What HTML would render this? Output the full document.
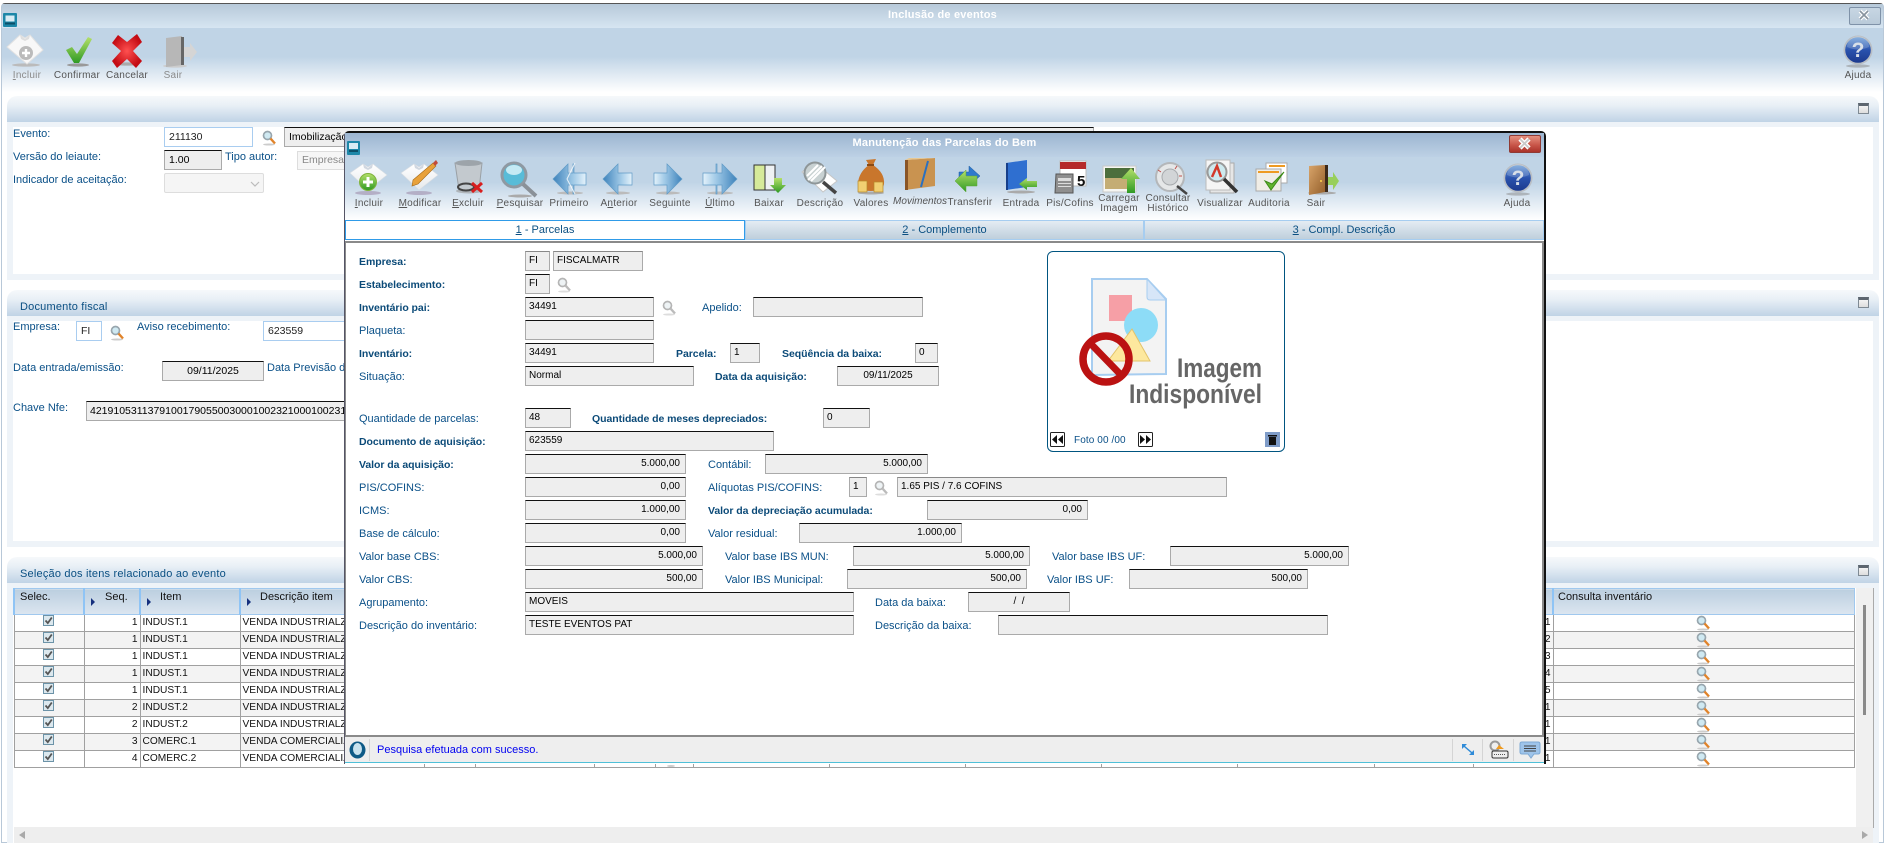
<!DOCTYPE html>
<html lang="pt-BR"><head><meta charset="utf-8"><title>Inclusão de eventos</title>
<style>
html,body{margin:0;padding:0;background:#fff}
#p{position:relative;width:1885px;height:843px;overflow:hidden;background:#fff;font-family:"Liberation Sans",Arial,sans-serif}
#p div,#p span{box-sizing:border-box}
.a{position:absolute}
.l{position:absolute;height:14px;line-height:14px;font-size:11px;color:#0a5088;white-space:nowrap}
.b{font-weight:bold;font-size:10.5px;letter-spacing:-.05px;color:#0b4a78}
.f{position:absolute;height:20px;background:#eee;border:1px solid #aaa;border-top-color:#111;font-size:10px;line-height:18px;color:#000;padding:0 3px;white-space:nowrap;overflow:hidden}
.r{text-align:right;padding-right:5px}.c{text-align:center}
.i{position:absolute;height:20px;background:#fff;border:1px solid #a9cdf0;font-size:10.5px;line-height:18px;color:#222;padding:0 4px;overflow:hidden}
.t{position:absolute;font-size:10px;line-height:11px;color:#555;letter-spacing:.25px;text-align:center;white-space:nowrap;transform:translateX(-50%)}
.g{color:#8b8b8b}
.ph{position:absolute;left:7px;width:1872px;height:26px;background:linear-gradient(#f6f9fb,#e9f0f6 35%,#c0d3e6);border-radius:10px 10px 0 0;font-size:11px;line-height:34px;padding-left:13px;color:#0a4f82;letter-spacing:.2px}
.pb{position:absolute;left:7px;width:1872px;background:#eef3f8}
.pw{position:absolute;left:13px;width:1860px;background:#fff}
.mn{position:absolute;left:1858px;width:11px;height:11px;background:linear-gradient(#f3f3f3,#ddd);border:1px solid #7f8a94;border-top:3px solid #5d6670}
table{position:absolute;left:13px;top:588px;border-collapse:collapse;table-layout:fixed;width:1840px;font-size:10.2px;color:#111}
th{height:23px;padding:2px 0 0;vertical-align:top;text-align:left;font-weight:normal;font-size:11px;line-height:12px;background:linear-gradient(#bccfe0,#dce6f0);border:1px solid #a0c8ee;border-left:2px solid #8fc4f5;color:#111}
td{height:16px;padding:0 2px;border:1px solid #a0a0a0;white-space:nowrap;overflow:hidden;line-height:14px}
tr.e td{background:#f3f3f3}
td.n{text-align:right}
.tab{position:absolute;top:220px;height:20px;font-size:11px;line-height:19px;text-align:center;color:#0a4f82;border:1px solid #a6cdf0;background:linear-gradient(#e4ecf3,#bfcfdc)}
u{text-decoration:underline}
</style></head><body><div id="p">

<!-- main window -->
<div class="a" style="left:1px;top:3px;width:1883px;height:840px;border:1px solid #b8c8d8;border-top:1px solid #555;border-radius:4px 4px 0 0;background:#fff"></div>
<div class="a" style="left:2px;top:4px;width:1881px;height:24px;background:linear-gradient(#b7c9d9,#d6e5f1)"></div>
<div class="a" style="left:2px;top:28px;width:1881px;height:64px;background:linear-gradient(#c0d4e6,#c0d4e6 45%,#fff)"></div>
<div class="a" style="left:0;top:8px;width:1885px;text-align:center;font-size:11px;font-weight:bold;line-height:14px;color:#fff;letter-spacing:.2px">Inclusão de eventos</div>
<div class="a" style="left:1849px;top:7px;width:32px;height:18px;border:1px solid #7f92a8;border-radius:2px;background:linear-gradient(#c7d6e3,#b9cad9)"></div>

<div class="t g" style="left:27px;top:70px"><u>I</u>ncluir</div>
<div class="t" style="left:77px;top:70px">Confirmar</div>
<div class="t" style="left:127px;top:70px">Cancelar</div>
<div class="t g" style="left:173px;top:70px">Sair</div>
<div class="t" style="left:1858px;top:70px">Ajuda</div>

<!-- panel 1 -->
<div class="pb" style="top:122px;height:158px"></div><div class="pw" style="top:127px;height:147px"></div>
<div class="ph" style="top:96px"></div><div class="mn" style="top:103px"></div>
<div class="l" style="left:13px;top:127px">Evento:</div>
<div class="i" style="left:164px;top:127px;width:89px">211130</div>
<div class="f" style="left:284px;top:127px;width:810px;line-height:18px;font-size:10.5px;padding-left:4px">Imobilização</div>
<div class="l" style="left:13px;top:150px">Versão do leiaute:</div>
<div class="f" style="left:164px;top:150px;width:58px;font-size:10.5px;line-height:18px;padding-left:4px">1.00</div>
<div class="l" style="left:225px;top:150px">Tipo autor:</div>
<div class="a" style="left:297px;top:151px;width:100px;height:19px;background:#f6f6f6;border:1px solid #ddd;font-size:10.5px;line-height:17px;color:#888;padding-left:4px">Empresa</div>
<div class="l" style="left:13px;top:173px">Indicador de aceitação:</div>
<div class="a" style="left:164px;top:173px;width:100px;height:20px;background:#f5f5f5;border:1px solid #ddd;border-radius:2px"></div>

<!-- panel 2 -->
<div class="pb" style="top:316px;height:231px"></div><div class="pw" style="top:321px;height:220px"></div>
<div class="ph" style="top:290px">Documento fiscal</div><div class="mn" style="top:297px"></div>
<div class="l" style="left:13px;top:320px">Empresa:</div>
<div class="i" style="left:76px;top:321px;width:26px">FI</div>
<div class="l" style="left:137px;top:320px">Aviso recebimento:</div>
<div class="i" style="left:263px;top:321px;width:120px">623559</div>
<div class="l" style="left:13px;top:361px">Data entrada/emissão:</div>
<div class="f c" style="left:162px;top:361px;width:102px;font-size:10.5px;line-height:18px">09/11/2025</div>
<div class="l" style="left:267px;top:361px">Data Previsão de</div>
<div class="l" style="left:13px;top:401px">Chave Nfe:</div>
<div class="f" style="left:86px;top:401px;width:300px;font-size:10.5px;line-height:18px">421910531137910017905500300010023210001002311</div>

<!-- panel 3 -->
<div class="pb" style="top:583px;height:260px"></div><div class="pw" style="top:588px;height:255px"></div>
<div class="ph" style="top:557px">Seleção dos itens relacionado ao evento</div><div class="mn" style="top:565px"></div>

<table><colgroup><col style="width:70px"><col style="width:56px"><col style="width:100px"><col style="width:184px"><col style="width:51px"><col style="width:119px"><col style="width:61px"><col style="width:38px"><col style="width:136px"><col style="width:136px"><col style="width:136px"><col style="width:136px"><col style="width:137px"><col style="width:99px"><col style="width:80px"><col style="width:301px"></colgroup>
<tr><th style="padding-left:5px">Selec.</th><th style="padding-left:20px">Seq.</th><th style="padding-left:19px">Item</th><th style="padding-left:19px">Descrição item</th><th></th><th></th><th></th><th></th><th></th><th></th><th></th><th></th><th></th><th></th><th></th><th style="padding-left:4px">Consulta inventário</th></tr>
<tr><td></td><td class="n">1</td><td>INDUST.1</td><td>VENDA INDUSTRIALZ</td><td></td><td></td><td></td><td></td><td></td><td></td><td></td><td></td><td></td><td></td><td class="n">1</td><td></td></tr>
<tr class="e"><td></td><td class="n">1</td><td>INDUST.1</td><td>VENDA INDUSTRIALZ</td><td></td><td></td><td></td><td></td><td></td><td></td><td></td><td></td><td></td><td></td><td class="n">2</td><td></td></tr>
<tr><td></td><td class="n">1</td><td>INDUST.1</td><td>VENDA INDUSTRIALZ</td><td></td><td></td><td></td><td></td><td></td><td></td><td></td><td></td><td></td><td></td><td class="n">3</td><td></td></tr>
<tr class="e"><td></td><td class="n">1</td><td>INDUST.1</td><td>VENDA INDUSTRIALZ</td><td></td><td></td><td></td><td></td><td></td><td></td><td></td><td></td><td></td><td></td><td class="n">4</td><td></td></tr>
<tr><td></td><td class="n">1</td><td>INDUST.1</td><td>VENDA INDUSTRIALZ</td><td></td><td></td><td></td><td></td><td></td><td></td><td></td><td></td><td></td><td></td><td class="n">5</td><td></td></tr>
<tr class="e"><td></td><td class="n">2</td><td>INDUST.2</td><td>VENDA INDUSTRIALZ</td><td></td><td></td><td></td><td></td><td></td><td></td><td></td><td></td><td></td><td></td><td class="n">1</td><td></td></tr>
<tr><td></td><td class="n">2</td><td>INDUST.2</td><td>VENDA INDUSTRIALZ</td><td></td><td></td><td></td><td></td><td></td><td></td><td></td><td></td><td></td><td></td><td class="n">1</td><td></td></tr>
<tr class="e"><td></td><td class="n">3</td><td>COMERC.1</td><td>VENDA COMERCIALIZ</td><td></td><td></td><td></td><td></td><td></td><td></td><td></td><td></td><td></td><td></td><td class="n">1</td><td></td></tr>
<tr><td></td><td class="n">4</td><td>COMERC.2</td><td>VENDA COMERCIALIZ</td><td></td><td></td><td></td><td></td><td></td><td></td><td></td><td></td><td></td><td></td><td class="n">1</td><td></td></tr>
</table>
<div class="a" style="left:1856px;top:588px;width:18px;height:240px;background:#f0f0f0;border-right:1px solid #aaa"></div>
<div class="a" style="left:1863px;top:605px;width:3px;height:110px;background:#8a8a8a"></div>
<div class="a" style="left:14px;top:827px;width:1859px;height:16px;background:#eee"></div>

<!-- lower layer icons -->
<svg class="a" style="left:0;top:0" width="1885" height="843">
<defs>
<g id="lens"><ellipse cx="7" cy="14.5" rx="6" ry="1" fill="#ccc"/><circle cx="5.5" cy="5.5" r="4" fill="#cfe9f2" stroke="#98a6ae" stroke-width="1.7"/><path d="M8.5 8.5L13 13.5" stroke="#e0832a" stroke-width="2.4"/></g>
<g id="lensg"><ellipse cx="7" cy="14.5" rx="6" ry="1" fill="#ddd"/><circle cx="5.5" cy="5.5" r="4" fill="#eef3f5" stroke="#b5b5b5" stroke-width="1.7"/><path d="M8.5 8.5L13 13.5" stroke="#bbb" stroke-width="2.4"/></g>
<g id="chk"><rect x=".5" y=".5" width="10" height="10" fill="#dce8ee" stroke="#6c93a8"/><path d="M2.5 5.5l2.3 2.6L8.8 2.5" fill="none" stroke="#555" stroke-width="1.8"/></g>
<g id="tri"><path d="M0 0l4 4-4 4z" fill="#16307e"/></g>
<linearGradient id="hb" x1="0" y1="0" x2="0" y2="1"><stop offset="0" stop-color="#6d9ed8"/><stop offset=".5" stop-color="#2a52ad"/><stop offset="1" stop-color="#1c3a8e"/></linearGradient>
<radialGradient id="rd"><stop offset="0" stop-color="#ff5050"/><stop offset="1" stop-color="#c40c14"/></radialGradient>
<linearGradient id="gn" x1="0" y1="0" x2="0" y2="1"><stop offset="0" stop-color="#b5e06a"/><stop offset="1" stop-color="#2f9a24"/></linearGradient>
<linearGradient id="bl" x1="0" y1="0" x2="1" y2="0"><stop offset="0" stop-color="#3d82bb"/><stop offset=".6" stop-color="#9ec8e6"/><stop offset="1" stop-color="#e4f2fb"/></linearGradient>
<linearGradient id="br" x1="1" y1="0" x2="0" y2="0"><stop offset="0" stop-color="#3d82bb"/><stop offset=".6" stop-color="#9ec8e6"/><stop offset="1" stop-color="#e4f2fb"/></linearGradient>
<linearGradient id="dr" x1="0" y1="0" x2="1" y2="1"><stop offset="0" stop-color="#d8a46a"/><stop offset="1" stop-color="#945f2a"/></linearGradient>
<g id="help"><ellipse cx="15" cy="31" rx="12" ry="1.6" fill="#888" opacity=".5"/><circle cx="15" cy="15" r="14.5" fill="#b9bec4"/><circle cx="15" cy="15" r="12.8" fill="url(#hb)"/><path d="M4 12a11 11 0 0 1 22 0q-11 5-22 0z" fill="#fff" opacity=".18"/><text x="15" y="22" text-anchor="middle" font-family="Liberation Sans" font-weight="bold" font-size="21" fill="#d8dfe8">?</text></g>
</defs>
<!-- win icon -->
<rect x="3" y="13" width="14" height="14" fill="#1d87a8" rx="1"/><rect x="5.5" y="15.5" width="9" height="6" fill="#d9ecf4"/><rect x="5" y="22.5" width="10" height="2" fill="#0c4f68"/>
<!-- close X -->
<path d="M1860 11l8 8m0-8l-8 8" stroke="#fff" stroke-width="4"/><path d="M1860 11l8 8m0-8l-8 8" stroke="#88939e" stroke-width="1.6"/>
<!-- toolbar: Incluir disabled -->
<ellipse cx="26" cy="65" rx="14" ry="1.6" fill="#bbb"/>
<path d="M7 47L20 35L25 38L30 35L43 50L27 64Z" fill="#f8f8f8" stroke="#e2e2e2"/><path d="M20 35l5 4 5-4-1 4-4 2-4-2z" fill="#dedede"/><circle cx="26" cy="53" r="7" fill="#bbb"/><path d="M22 53h8m-4-4v8" stroke="#fff" stroke-width="2.4"/>
<!-- Confirmar -->
<ellipse cx="78" cy="65" rx="11" ry="1.6" fill="#999"/><path d="M66 50l6-3 5 7 11-17 4 2-13 24h-5z" fill="url(#gn)"/>
<!-- Cancelar -->
<ellipse cx="127" cy="64" rx="12" ry="1.6" fill="#aaa"/><path d="M112 43l6-8 9 7 10-8 5 8-9 9 9 10-6 7-9-9-10 9-5-7 9-10z" fill="url(#rd)"/>
<!-- Sair disabled -->
<ellipse cx="175" cy="66" rx="12" ry="1.6" fill="#ccc"/><path d="M166 38l16-2v29l-16 2z" fill="#b7b7b7"/><rect x="181" y="37" width="3" height="28" fill="#666"/><path d="M184 47h6v-4l7 9-7 9v-4h-6z" fill="#d5d5d5"/>
<use href="#help" x="1843" y="35"/>
<use href="#lens" x="262" y="130"/><path d="M251 182l4 4 4-4" fill="none" stroke="#bbb" stroke-width="1.2"/>
<use href="#lens" x="110" y="325"/>
<!-- checks -->
<use href="#chk" x="43" y="615"/><use href="#chk" x="43" y="632"/><use href="#chk" x="43" y="649"/><use href="#chk" x="43" y="666"/><use href="#chk" x="43" y="683"/><use href="#chk" x="43" y="700"/><use href="#chk" x="43" y="717"/><use href="#chk" x="43" y="734"/><use href="#chk" x="43" y="751"/>
<use href="#tri" x="91" y="598"/><use href="#tri" x="147" y="598"/><use href="#tri" x="247" y="598"/>
<use href="#lens" x="1696" y="615"/><use href="#lens" x="1696" y="632"/><use href="#lens" x="1696" y="649"/><use href="#lens" x="1696" y="666"/><use href="#lens" x="1696" y="683"/><use href="#lens" x="1696" y="700"/><use href="#lens" x="1696" y="717"/><use href="#lens" x="1696" y="734"/><use href="#lens" x="1696" y="751"/>
<path d="M25 831v8l-6-4z" fill="#a9a9a9"/><path d="M1862 831v8l6-4z" fill="#a9a9a9"/>
<ellipse cx="671" cy="766" rx="4" ry="1" fill="#ccc"/>
</svg>

<!-- modal -->
<div class="a" style="left:344px;top:131px;width:1202px;height:633px;background:#fff;border:2px solid #111;border-left:1px solid #556;border-bottom:0;border-radius:5px 5px 0 0"></div>
<div class="a" style="left:345px;top:133px;width:1199px;height:24px;background:linear-gradient(#9cb5d1,#bdd1e5)"></div>
<div class="a" style="left:345px;top:157px;width:1199px;height:63px;background:linear-gradient(#c0d4e6,#c0d4e6 40%,#fff)"></div>
<div class="a" style="left:345px;top:136px;width:1199px;text-align:center;font-size:11px;font-weight:bold;line-height:14px;color:#fff;letter-spacing:.2px">Manutenção das Parcelas do Bem</div>
<div class="a" style="left:1509px;top:135px;width:32px;height:18px;border:1px solid #8f3a34;border-radius:2px;background:linear-gradient(#e5907f,#c9574a 55%,#aa332a)"></div>

<div class="t" style="left:369px;top:198px"><u>I</u>ncluir</div>
<div class="t" style="left:420px;top:198px"><u>M</u>odificar</div>
<div class="t" style="left:468px;top:198px"><u>E</u>xcluir</div>
<div class="t" style="left:520px;top:198px"><u>P</u>esquisar</div>
<div class="t" style="left:569px;top:198px">Primeiro</div>
<div class="t" style="left:619px;top:198px">A<u>n</u>terior</div>
<div class="t" style="left:670px;top:198px">Se<u>g</u>uinte</div>
<div class="t" style="left:720px;top:198px"><u>Ú</u>ltimo</div>
<div class="t" style="left:769px;top:198px">Baixar</div>
<div class="t" style="left:820px;top:198px">Descrição</div>
<div class="t" style="left:871px;top:198px">Valores</div>
<div class="t" style="left:920px;top:196px;font-style:italic;letter-spacing:0">Movimentos</div>
<div class="t" style="left:970px;top:197px">Transferir</div>
<div class="t" style="left:1021px;top:198px">Entrada</div>
<div class="t" style="left:1070px;top:198px">Pis/Cofins</div>
<div class="t" style="left:1119px;top:194px;line-height:9.5px">Carregar<br>Imagem</div>
<div class="t" style="left:1168px;top:194px;line-height:9.5px">Consultar<br>Histórico</div>
<div class="t" style="left:1220px;top:198px">Visualizar</div>
<div class="t" style="left:1269px;top:198px">Auditoria</div>
<div class="t" style="left:1316px;top:198px">Sair</div>
<div class="t" style="left:1517px;top:198px">Ajuda</div>

<div class="tab" style="left:345px;width:400px;background:#fff;border:1px solid #2f9be8;color:#0a4f82"><u>1</u> - Parcelas</div>
<div class="tab" style="left:745px;width:399px"><u>2</u> - Complemento</div>
<div class="tab" style="left:1144px;width:400px"><u>3</u> - Compl. Descrição</div>

<div class="a" style="left:345px;top:241px;width:1199px;height:496px;background:#fff;border:2px solid #8a8a8a;border-left:1px solid #8a8a8a"></div>

<!-- form -->
<div class="l b" style="left:359px;top:255px">Empresa:</div>
<div class="f" style="left:525px;top:251px;width:25px;border-top-color:#888">FI</div>
<div class="f" style="left:553px;top:251px;width:90px;border-top-color:#888">FISCALMATR</div>
<div class="l b" style="left:359px;top:278px">Estabelecimento:</div>
<div class="f" style="left:525px;top:274px;width:25px">FI</div>
<div class="l b" style="left:359px;top:301px">Inventário pai:</div>
<div class="f" style="left:525px;top:297px;width:129px">34491</div>
<div class="l" style="left:702px;top:301px">Apelido:</div>
<div class="f" style="left:753px;top:297px;width:170px"></div>
<div class="l" style="left:359px;top:324px">Plaqueta:</div>
<div class="f" style="left:525px;top:320px;width:129px"></div>
<div class="l b" style="left:359px;top:347px">Inventário:</div>
<div class="f" style="left:525px;top:343px;width:129px">34491</div>
<div class="l b" style="left:676px;top:347px">Parcela:</div>
<div class="f" style="left:730px;top:343px;width:30px">1</div>
<div class="l b" style="left:782px;top:347px">Seqüência da baixa:</div>
<div class="f" style="left:915px;top:343px;width:23px">0</div>
<div class="l" style="left:359px;top:370px">Situação:</div>
<div class="f" style="left:525px;top:366px;width:169px">Normal</div>
<div class="l b" style="left:715px;top:370px">Data da aquisição:</div>
<div class="f c" style="left:837px;top:366px;width:102px">09/11/2025</div>
<div class="l" style="left:359px;top:412px">Quantidade de parcelas:</div>
<div class="f" style="left:525px;top:408px;width:46px">48</div>
<div class="l b" style="left:592px;top:412px">Quantidade de meses depreciados:</div>
<div class="f" style="left:823px;top:408px;width:47px">0</div>
<div class="l b" style="left:359px;top:435px">Documento de aquisição:</div>
<div class="f" style="left:525px;top:431px;width:249px">623559</div>
<div class="l b" style="left:359px;top:458px">Valor da aquisição:</div>
<div class="f r" style="left:525px;top:454px;width:161px">5.000,00</div>
<div class="l" style="left:708px;top:458px">Contábil:</div>
<div class="f r" style="left:765px;top:454px;width:163px">5.000,00</div>
<div class="l" style="left:359px;top:481px">PIS/COFINS:</div>
<div class="f r" style="left:525px;top:477px;width:161px">0,00</div>
<div class="l" style="left:708px;top:481px">Alíquotas PIS/COFINS:</div>
<div class="f" style="left:849px;top:477px;width:18px;border-top-color:#888">1</div>
<div class="f" style="left:897px;top:477px;width:330px;border-top-color:#888">1.65 PIS / 7.6 COFINS</div>
<div class="l" style="left:359px;top:504px">ICMS:</div>
<div class="f r" style="left:525px;top:500px;width:161px">1.000,00</div>
<div class="l b" style="left:708px;top:504px">Valor da depreciação acumulada:</div>
<div class="f r" style="left:927px;top:500px;width:161px">0,00</div>
<div class="l" style="left:359px;top:527px">Base de cálculo:</div>
<div class="f r" style="left:525px;top:523px;width:161px">0,00</div>
<div class="l" style="left:708px;top:527px">Valor residual:</div>
<div class="f r" style="left:799px;top:523px;width:163px">1.000,00</div>
<div class="l" style="left:359px;top:550px">Valor base CBS:</div>
<div class="f r" style="left:525px;top:546px;width:178px">5.000,00</div>
<div class="l" style="left:725px;top:550px">Valor base IBS MUN:</div>
<div class="f r" style="left:853px;top:546px;width:177px">5.000,00</div>
<div class="l" style="left:1052px;top:550px">Valor base IBS UF:</div>
<div class="f r" style="left:1170px;top:546px;width:179px">5.000,00</div>
<div class="l" style="left:359px;top:573px">Valor CBS:</div>
<div class="f r" style="left:525px;top:569px;width:178px">500,00</div>
<div class="l" style="left:725px;top:573px">Valor IBS Municipal:</div>
<div class="f r" style="left:847px;top:569px;width:180px">500,00</div>
<div class="l" style="left:1047px;top:573px">Valor IBS UF:</div>
<div class="f r" style="left:1129px;top:569px;width:179px">500,00</div>
<div class="l" style="left:359px;top:596px">Agrupamento:</div>
<div class="f" style="left:525px;top:592px;width:329px">MOVEIS</div>
<div class="l" style="left:875px;top:596px">Data da baixa:</div>
<div class="f c" style="left:968px;top:592px;width:102px">/&nbsp;&nbsp;/</div>
<div class="l" style="left:359px;top:619px">Descrição do inventário:</div>
<div class="f" style="left:525px;top:615px;width:329px">TESTE EVENTOS PAT</div>
<div class="l" style="left:875px;top:619px">Descrição da baixa:</div>
<div class="f" style="left:998px;top:615px;width:330px"></div>

<!-- image box -->
<div class="a" style="left:1047px;top:251px;width:238px;height:201px;border:1px solid #005580;border-radius:6px;background:#fff"></div>
<div class="a" style="left:1074px;top:435px;font-size:10px;line-height:12px;color:#0a5088;letter-spacing:.1px">Foto 00 /00</div>

<!-- status bar -->
<div class="a" style="left:345px;top:737px;width:1199px;height:26px;background:#eee;border-bottom:1px solid #4fc0d8"></div>
<div class="a" style="left:377px;top:743px;font-size:11px;line-height:14px;color:#0000f0">Pesquisa efetuada com sucesso.</div>

<!-- modal icons -->
<svg class="a" style="left:0;top:0" width="1885" height="843" font-family="Liberation Sans">
<defs><linearGradient id="pg" x1="0" y1="0" x2="0" y2="1"><stop offset="0" stop-color="#fff"/><stop offset="1" stop-color="#e6e9ec"/></linearGradient>
<g id="sheet"><ellipse cx="18" cy="31" rx="13" ry="2" fill="#a79ab5" opacity=".7"/><path d="M0 11L13 2L18 5L23 2L37 13L18 28Z" fill="url(#pg)" stroke="#d8dde2" stroke-width=".6"/><path d="M13 2l5 4 5-4-1 4-4 2-4-2z" fill="#d0d7e0"/></g></defs>
<rect x="347" y="141" width="13" height="14" fill="#1d87a8" rx="1"/><rect x="349" y="143" width="9" height="6" fill="#d9ecf4"/><rect x="349" y="150" width="9" height="2" fill="#0c4f68"/>
<path d="M1520 139l9 9m0-9l-9 9" stroke="#fff" stroke-width="4.5"/><path d="M1520 139l9 9m0-9l-9 9" stroke="#c9c9c9" stroke-width="1.8"/>
<!-- Incluir -->
<use href="#sheet" x="350" y="162"/><circle cx="368" cy="182" r="8.5" fill="url(#gn)" stroke="#7fb23c"/><path d="M363 182h10m-5-5v10" stroke="#fff" stroke-width="3"/>
<!-- Modificar -->
<use href="#sheet" x="401" y="162"/><path d="M413 180l20-17 3 3-18 18-6 2z" fill="#e8a13a" stroke="#a56a18" stroke-width=".6"/><path d="M433 163l3-3 2 3-3 3z" fill="#c14a3a"/>
<!-- Excluir -->
<ellipse cx="469" cy="191" rx="13" ry="2.5" fill="#999" opacity=".6"/><path d="M455 163h27l-3 27h-20z" fill="#c3c9ce" stroke="#9aa0a5"/><ellipse cx="468.500" cy="163" rx="13.500" ry="3" fill="#9da4aa"/><ellipse cx="466" cy="187" rx="8" ry="3.500" fill="none" stroke="#444" stroke-width="2"/><path d="M472 183l10 9m0-9l-10 9" stroke="#d81e1e" stroke-width="3"/>
<!-- Pesquisar -->
<ellipse cx="520" cy="196" rx="12" ry="1.500" fill="#aaa"/><circle cx="514" cy="175" r="12" fill="#58bcd8" stroke="#8f99a2" stroke-width="3"/><ellipse cx="514" cy="170" rx="8" ry="5" fill="#c5eaf4"/><path d="M523 184l13 12" stroke="#8a9198" stroke-width="4"/>
<!-- Primeiro -->
<ellipse cx="570" cy="193" rx="13" ry="1.500" fill="#bbb"/><path d="M553 179l15-15v9h5v-9l1 0v9h12v12h-12v9l-1 0v-9h-5v9z" fill="url(#bl)" stroke="#5f9ac6" stroke-width=".7"/><path d="M575 163l-8 16 8 15" stroke="#fff" stroke-width="1" fill="none" opacity=".8"/>
<!-- Anterior -->
<ellipse cx="618" cy="193" rx="12" ry="1.500" fill="#bbb"/><path d="M603 179l15-15v9h14v12h-14v9z" fill="url(#bl)" stroke="#5f9ac6" stroke-width=".7"/>
<!-- Seguinte -->
<ellipse cx="668" cy="193" rx="12" ry="1.500" fill="#bbb"/><path d="M682 179l-15-15v9h-13v12h13v9z" fill="url(#br)" stroke="#5f9ac6" stroke-width=".7"/>
<!-- Ultimo -->
<ellipse cx="720" cy="193" rx="13" ry="1.500" fill="#bbb"/><path d="M737 179l-15-15v9h-5v-9l-1 0v9h-13v12h13v9l1 0v-9h5v9z" fill="url(#br)" stroke="#5f9ac6" stroke-width=".7"/>
<!-- Baixar -->
<rect x="754" y="165" width="11" height="25" fill="#d6ea9a" stroke="#333"/><rect x="765" y="165" width="10" height="25" fill="#eef1f3" stroke="#333"/><path d="M774 178h8v7h4l-8 8-8-8h4z" fill="url(#gn)"/>
<!-- Descricao -->
<path d="M802 172l12-10 23 19-14 11z" fill="#fff" stroke="#c6c6c6"/><circle cx="815" cy="173" r="10.500" fill="#c8d1d2" stroke="#8e9698" stroke-width="2"/><path d="M808 180l14-14m-11 15l14-14m-18 9l11-11" stroke="#fff" stroke-width="2"/><path d="M823 182l13 11" stroke="#444" stroke-width="3.500"/>
<!-- Valores -->
<ellipse cx="871" cy="193" rx="13" ry="1.500" fill="#aaa"/><path d="M866 160l10-1-3 6q12 8 11 19-1 7-13 7-14 0-13-8 1-11 11-18z" fill="#c9762c"/><path d="M867 165h7" stroke="#8a4b15" stroke-width="2"/><rect x="858" y="181" width="9" height="11" fill="#f1cf72" stroke="#b4882a" stroke-width=".7"/><rect x="874" y="182" width="9" height="10" fill="#f1cf72" stroke="#b4882a" stroke-width=".7"/>
<!-- Movimentos -->
<path d="M905 160l30-2v28l-30 4z" fill="#c99350"/><path d="M905 160l4-2 26 0-30 2z" fill="#e8c893"/><path d="M905 160h3v30h-3z" fill="#8a5526"/><path d="M921 187l7-26" stroke="#2a70c0" stroke-width="2"/>
<!-- Transferir -->
<path d="M959 172h10v-6l11 10-11 10v-6h-10z" fill="#2f79cc" stroke="#1f5c9e" stroke-width=".5"/><path d="M955 181l11-11v6h11v10h-11v6z" fill="url(#gn)" stroke="#5ea634" stroke-width=".5"/>
<!-- Entrada -->
<ellipse cx="1021" cy="192" rx="14" ry="1.500" fill="#aaa"/><path d="M1006 163l21-3v27l-21 3z" fill="#2f6fd0"/><path d="M1006 163h2v27h-2z" fill="#173f8a"/><path d="M1019 184l8-6v3h10v6h-10v3z" fill="url(#gn)"/>
<!-- Pis/Cofins -->
<rect x="1060" y="161" width="26" height="25" fill="#fff" stroke="#bbb"/><rect x="1060" y="162" width="26" height="7" fill="#b52a2a"/><text x="1077" y="186" font-size="15" font-weight="bold" fill="#111">5</text><path d="M1056 174h17v19h-18z" fill="#8f8f8f" stroke="#555"/><path d="M1058 178h13v3h-13zM1058 183h13v1h-13zM1058 186h13v1h-13z" fill="#ddd"/>
<!-- Carregar -->
<rect x="1103" y="166" width="33" height="26" fill="#f6f6f2" stroke="#c8c8c8"/><rect x="1105" y="168" width="29" height="10" fill="#4c6e3c"/><rect x="1105" y="178" width="29" height="11" fill="#c4ad74"/><path d="M1127 193v-14h-6l10-11 9 11h-5v14z" fill="url(#gn)"/>
<!-- Consultar -->
<circle cx="1170" cy="177" r="14" fill="#e5e7e8" stroke="#b4b7ba" stroke-width="2"/><circle cx="1170" cy="177" r="8" fill="#d2d5d7" stroke="#a8abae"/><path d="M1158 170l3 2m16-6l-2 3m7 7h-3" stroke="#c0504d"/><path d="M1177 186l10 8" stroke="#444" stroke-width="2.500"/>
<!-- Visualizar -->
<rect x="1210" y="163" width="24" height="30" fill="#e6e6e6" stroke="#aaa"/><rect x="1206" y="160" width="24" height="30" fill="#f5f5f5" stroke="#bbb"/><circle cx="1217" cy="172" r="9.500" fill="#cde9ee" stroke="#999" stroke-width="2"/><path d="M1212 177l5-11 4 11" stroke="#d23a2a" stroke-width="2.500" fill="none"/><path d="M1224 179l13 13" stroke="#333" stroke-width="3.500"/>
<!-- Auditoria -->
<rect x="1266" y="163" width="21" height="20" fill="#fff" stroke="#aaa"/><rect x="1269" y="165" width="16" height="2" fill="#ee9a22"/><rect x="1256" y="169" width="25" height="22" fill="#f0ede6" stroke="#aaa"/><rect x="1258" y="171" width="21" height="2" fill="#ee9a22"/><path d="M1265 181l6 9 13-18-12 12z" fill="#63b42e" stroke="#3d8a18"/>
<!-- Sair -->
<ellipse cx="1322" cy="193" rx="14" ry="1.500" fill="#aaa"/><path d="M1309 166l16-1v27l-16 3z" fill="url(#dr)"/><rect x="1325" y="165" width="3" height="27" fill="#3d2a1a"/><circle cx="1321" cy="181" r="1" fill="#ffd24a"/><path d="M1328 177h5v-5l6 9-6 9v-5h-5z" fill="#98cf5c"/>
<!-- Ajuda -->
<use href="#help" x="1503" y="163"/>
<!-- form lenses -->
<use href="#lensg" x="557" y="277"/><use href="#lensg" x="662" y="300"/><use href="#lensg" x="874" y="480"/>
<!-- image box -->
<path d="M1092 279h55l19 20v75l-74 1z" fill="#f3f3f3" stroke="#a7cdf0" stroke-width="2"/><path d="M1147 279v18q0 3 3 3h16z" fill="#d7e6f8" stroke="#a7cdf0"/>
<rect x="1109" y="295" width="23" height="26" fill="#f69fa6"/><circle cx="1141" cy="325" r="17" fill="#8ddcf7"/><path d="M1132 329l-24 32h42z" fill="#fde89e" stroke="#e3c36a"/>
<circle cx="1106" cy="359" r="23" fill="none" stroke="#bb1212" stroke-width="7.500"/><path d="M1090 343l32 33" stroke="#bb1212" stroke-width="7"/>
<text x="1262" y="377" font-weight="bold" font-size="27" fill="#666" text-anchor="end" textLength="85" lengthAdjust="spacingAndGlyphs">Imagem</text>
<text x="1262" y="403" font-weight="bold" font-size="27" fill="#666" text-anchor="end" textLength="133" lengthAdjust="spacingAndGlyphs">Indisponível</text>
<rect x="1050.500" y="432.500" width="14" height="14" fill="#fff" stroke="#222" rx="1"/><path d="M1057 435v9l-5-4.500zM1063 435v9l-5-4.500z" fill="#111"/>
<rect x="1138.500" y="432.500" width="14" height="14" fill="#fff" stroke="#222" rx="1"/><path d="M1140 435v9l5-4.500zM1146 435v9l5-4.500z" fill="#111"/>
<rect x="1265" y="432" width="15" height="15" fill="#7f9cc8"/><path d="M1269 437h7v8h-7zM1268 435h9v1.500h-9z" fill="#111"/>
<!-- status icons -->
<path d="M369.500 739v22M1452.500 739v22M1482.500 739v22M1513.500 739v22" stroke="#d4d4d4"/>
<ellipse cx="357.500" cy="750" rx="8" ry="8.500" fill="#0e5a86"/><ellipse cx="357.500" cy="749" rx="4.500" ry="6" fill="#c8e2ee"/>
<path d="M1462 744h5l-2 2 7 6 2-2v5h-5l2-2-7-6-2 2z" fill="#2f8bd8"/>
<circle cx="1495" cy="746" r="4.500" fill="none" stroke="#999" stroke-width="2"/><path d="M1499 745l5 4h-8z" fill="#ef9a1e"/><rect x="1492" y="751" width="16" height="7" rx="1.500" fill="#eee" stroke="#333"/><path d="M1494 754.500h12" stroke="#555" stroke-dasharray="1 1"/>
<path d="M1522 742h16q2 0 2 2v8q0 2-2 2h-4l-3 4-3-4h-6q-2 0-2-2v-8q0-2 2-2z" fill="#9ec4ea" stroke="#7da9d4"/><path d="M1524 746h12M1524 748.500h12M1524 751h12" stroke="#444"/>
</svg>
</div></body></html>
